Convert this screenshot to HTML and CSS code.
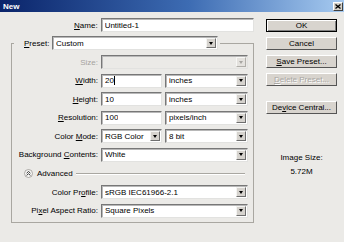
FILE: index.html
```html
<!DOCTYPE html>
<html lang="en">
<head>
    <meta charset="UTF-8">
    <meta name="viewport" content="width=device-width, initial-scale=1.0">
    <title>New</title>
    <link rel="stylesheet" href="styles.css">
</head>
<body>
    <div class="dialog">
        <div class="titlebar">
            <span class="title">New</span>
            <span class="close">
                <svg width="6" height="5" viewBox="0 0 6 5"><path d="M0.5 0.5 L5.5 4.5 M5.5 0.5 L0.5 4.5" stroke="#000" stroke-width="1.3"/></svg>
            </span>
        </div>
        <div class="content">
            <div class="main">
                <div class="row name-row">
                    <span class="label"><u>N</u>ame:</span>
                    <div class="field w-name"><span class="val">Untitled-1</span></div>
                </div>
                <fieldset class="group">
                    <legend>
                        <div class="legend-inner">
                            <span class="preset-label"><u>P</u>reset:</span>
                            <div class="field select w-preset"><span class="val">Custom</span><span class="arrow"></span></div>
                        </div>
                    </legend>
                    <div class="row">
                        <span class="label disabled-text">Size:</span>
                        <div class="field select disabled w-full"><span class="val"></span><span class="arrow"></span></div>
                    </div>
                    <div class="row">
                        <span class="label"><u>W</u>idth:</span>
                        <div class="field w-small"><span class="val">20</span><span class="caret"></span></div>
                        <div class="field select w-unit"><span class="val">inches</span><span class="arrow"></span></div>
                    </div>
                    <div class="row">
                        <span class="label"><u>H</u>eight:</span>
                        <div class="field w-small"><span class="val">10</span></div>
                        <div class="field select w-unit"><span class="val">inches</span><span class="arrow"></span></div>
                    </div>
                    <div class="row">
                        <span class="label"><u>R</u>esolution:</span>
                        <div class="field w-small"><span class="val">100</span></div>
                        <div class="field select w-unit"><span class="val">pixels/inch</span><span class="arrow"></span></div>
                    </div>
                    <div class="row">
                        <span class="label">Color <u>M</u>ode:</span>
                        <div class="field select w-small"><span class="val">RGB Color</span><span class="arrow"></span></div>
                        <div class="field select w-unit"><span class="val">8 bit</span><span class="arrow"></span></div>
                    </div>
                    <div class="row">
                        <span class="label">Background <u>C</u>ontents:</span>
                        <div class="field select w-full"><span class="val">White</span><span class="arrow"></span></div>
                    </div>
                    <div class="row adv-row">
                        <svg class="adv-icon" width="9" height="9" viewBox="0 0 9 9">
                            <circle cx="4.5" cy="4.5" r="4" fill="#f6f6f4" stroke="#9a9893" stroke-width="0.8"/>
                            <path d="M2.6 4.2 L4.5 2.5 L6.4 4.2 M2.6 6.4 L4.5 4.7 L6.4 6.4" fill="none" stroke="#222" stroke-width="0.9"/>
                        </svg>
                        <span class="adv-text">Advanced</span>
                        <span class="adv-line"></span>
                    </div>
                    <div class="row profile-row">
                        <span class="label">Color Pr<u>o</u>file:</span>
                        <div class="field select w-full"><span class="val">sRGB IEC61966-2.1</span><span class="arrow"></span></div>
                    </div>
                    <div class="row">
                        <span class="label">Pi<u>x</u>el Aspect Ratio:</span>
                        <div class="field select w-full"><span class="val">Square Pixels</span><span class="arrow"></span></div>
                    </div>
                </fieldset>
            </div>
            <div class="side">
                <div class="btn default">OK</div>
                <div class="btn">Cancel</div>
                <div class="btn"><u>S</u>ave Preset...</div>
                <div class="btn disabled"><u>D</u>elete Preset...</div>
                <div class="btn device">De<u>v</u>ice Central...</div>
                <div class="image-size">
                    <div>Image Size:</div>
                    <div class="size-value">5.72M</div>
                </div>
            </div>
        </div>
    </div>
</body>
</html>
```

FILE: styles.css
```css
body {
    margin: 0;
    font-family: 'Liberation Sans', Arial, sans-serif;
    font-size: 8px;
    color: #000000;
    background-color: #ebeae7;
}
.dialog {
    width: 344px;
    height: 242px;
    background-color: #ebeae7;
    overflow: hidden;
}
.titlebar {
    height: 12px;
    background: linear-gradient(to right, #0a246a, #3d6cb3 55%, #a6caf0);
    display: flex;
    align-items: center;
    justify-content: space-between;
    padding: 0 1px 0 3px;
}
.title {
    color: #ffffff;
    font-weight: bold;
}
.close {
    width: 10px;
    height: 9px;
    box-sizing: border-box;
    background-color: #d4d0c8;
    border: 1px solid;
    border-color: #ffffff #404040 #404040 #ffffff;
    display: flex;
    align-items: center;
    justify-content: center;
}
.content {
    display: flex;
    padding: 6px 0 0 11px;
}
.main {
    width: 243px;
}
.row {
    display: flex;
    align-items: center;
    height: 14px;
}
.label {
    width: 86px;
    margin-right: 3px;
    text-align: right;
    white-space: nowrap;
}
.name-row .label {
    width: 87px;
}
.disabled-text {
    color: #a5a39f;
}
.field {
    height: 14px;
    box-sizing: border-box;
    background-color: #ffffff;
    border: 1px solid;
    border-color: #777777 #e2e2e0 #e2e2e0 #777777;
    box-shadow: inset 1px 1px 0 #b8b8b8;
    padding-left: 3px;
    display: flex;
    align-items: center;
    white-space: nowrap;
}
.field .val {
    flex: 1;
    overflow: hidden;
}
.field + .field {
    margin-left: 3px;
}
.caret {
    width: 1px;
    height: 9px;
    background-color: #000000;
    margin-right: auto;
}
.field .caret {
    flex: none;
}
.w-name { width: 154px; }
.w-preset { width: 166px; }
.w-full { width: 147px; }
.w-small { width: 61px; }
.w-unit { width: 83px; }
.w-small .val {
    flex: none;
}
.select .val {
    flex: 1;
}
.arrow {
    width: 10px;
    height: 10px;
    margin-right: 1px;
    box-sizing: border-box;
    background-color: #d6d3ce;
    border: 1px solid;
    border-color: #f4f4f2 #6e6e6e #6e6e6e #f4f4f2;
    display: flex;
    align-items: center;
    justify-content: center;
}
.arrow::before {
    content: "";
    border-left: 2.5px solid transparent;
    border-right: 2.5px solid transparent;
    border-top: 3px solid #000000;
}
.disabled {
    background-color: #ebeae7;
}
.disabled .arrow {
    background-color: #e4e2de;
    border-color: #f7f7f5 #b0aea9 #b0aea9 #f7f7f5;
}
.disabled .arrow::before {
    border-top-color: #a8a6a2;
}
.group {
    margin: 4px 0 0 0;
    padding: 5px 0 4px 0;
    width: 243px;
    box-sizing: border-box;
    border: 1px solid #a9a7a1;
}
.group legend {
    margin-left: 2px;
    padding: 0 2px 0 10px;
}
.legend-inner {
    display: flex;
    align-items: center;
    height: 14px;
}
.preset-label {
    width: 28px;
}
.group .row + .row {
    margin-top: 4.6px;
}
.group .adv-row {
    margin-top: 11px;
}
.group .profile-row {
    margin-top: 10px;
}
.adv-icon {
    margin-left: 12px;
    margin-right: 4px;
}
.adv-line {
    flex: 1;
    height: 0;
    margin: 1px 8px 0 3px;
    border-top: 1px solid #a9a7a1;
    border-bottom: 1px solid #ffffff;
}
.side {
    width: 71px;
    margin-left: 12px;
    padding-top: 1px;
    display: flex;
    flex-direction: column;
}
.btn {
    height: 13px;
    box-sizing: border-box;
    background-color: #d8d4ce;
    border: 1px solid;
    border-color: #ffffff #555555 #555555 #ffffff;
    text-align: center;
    line-height: 11px;
    white-space: nowrap;
}
.btn + .btn {
    margin-top: 5px;
}
.btn.default {
    border: 1px solid #000000;
    box-shadow: inset 1px 1px 0 #ffffff, inset -1px -1px 0 #808080;
}
.btn.disabled {
    color: #a9a7a3;
    text-shadow: 1px 1px 0 #ffffff;
    background-color: #d8d4ce;
}
.btn.device {
    margin-top: 15px;
}
.image-size {
    margin-top: 39px;
    text-align: center;
    line-height: 10px;
}
.size-value {
    margin-top: 4px;
}
```
